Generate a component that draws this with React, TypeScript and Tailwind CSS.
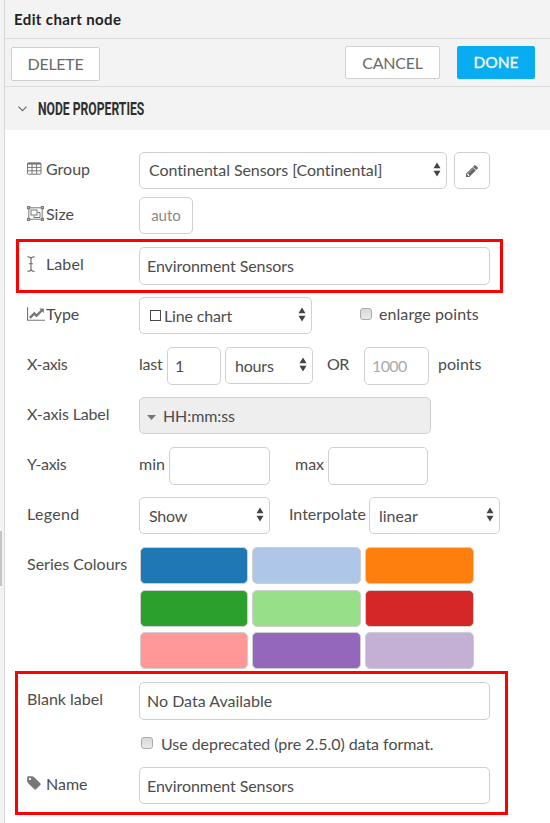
import React from "react";

type Kids = { children?: React.ReactNode; className?: string };

const TableIcon = () => (
  <svg className="-mt-0.5" width="15" height="13" viewBox="0 0 15 13" fill="none" stroke="#777" strokeWidth="1">
    <rect x="0.5" y="1" width="13.5" height="11.2" rx="1" />
    <path d="M0.5 1.6h13.5" strokeWidth="2" />
    <path d="M0.5 5.4h13.5M0.5 8.8h13.5M5 2v10M9.6 2v10" />
  </svg>
);

const ObjectGroupIcon = () => (
  <svg className="-mt-0.5" width="17" height="15" viewBox="0 0 17 15" fill="none" stroke="#777" strokeWidth="1">
    <path d="M2 1.8h13M2 13.2h13M1.8 2v11M15.2 2v11" />
    <rect x="0.5" y="0.5" width="2.2" height="2.2" fill="#bbb" />
    <rect x="14.3" y="0.5" width="2.2" height="2.2" fill="#bbb" />
    <rect x="0.5" y="12.3" width="2.2" height="2.2" fill="#bbb" />
    <rect x="14.3" y="12.3" width="2.2" height="2.2" fill="#bbb" />
    <rect x="4" y="4" width="6" height="5" />
    <path d="M10.500 6.500h2.500v5H7V9.500" />
  </svg>
);

const CursorIcon = () => (
  <svg width="8" height="16" viewBox="0 0 8 16" fill="none" stroke="#666" strokeWidth="1.1">
    <path d="M0.3 0.7C2.5 0.7 4 1.2 4 3v10c0 1.8-1.5 2.3-3.7 2.3M7.7 0.7C5.5 0.7 4 1.2 4 3v10c0 1.8 1.5 2.3 3.7 2.3M2.1 7.7h3.8" />
  </svg>
);

const LineChartIcon = () => (
  <svg className="-mt-px" width="18" height="16" viewBox="0 0 2048 1792" fill="#777">
    <path d="M2048 1536v128h-2048v-1536h128v1408h1920zm-128-1248v435q0 21-19.5 29.5t-35.5-7.5l-121-121-633 633q-10 10-23 10t-23-10l-233-233-416 416-192-192 585-585q10-10 23-10t23 10l233 233 464-464-121-121q-16-16-7.5-35.5t29.5-19.5h435q14 0 23 9t9 23z" />
  </svg>
);

const TagIcon = () => (
  <svg className="-ml-px -mt-0.5" width="16" height="16" viewBox="0 0 1792 1792" fill="#777">
    <path d="M576 448q0-53-37.5-90.5t-90.5-37.5-90.5 37.5-37.5 90.5 37.5 90.5 90.5 37.5 90.5-37.5 37.5-90.5zm1067 576q0 53-37 90l-491 492q-39 37-91 37-53 0-90-37l-715-716q-38-37-64.5-101t-26.5-117v-416q0-52 38-90t90-38h416q53 0 117 26.5t102 64.5l715 714q37 39 37 91z" />
  </svg>
);

const PencilIcon = () => (
  <svg width="14" height="14" viewBox="0 0 1792 1792" fill="#666">
    <path d="M491 1536l91-91-235-235-91 91v107h128v128h107zm523-928q0-22-22-22-10 0-17 7l-542 542q-7 7-7 17 0 22 22 22 10 0 17-7l542-542q7-7 7-17zm-54-192l416 416-832 832h-416v-416zm683 96q0 53-37 90l-166 166-416-416 166-165q36-38 90-38 53 0 91 38l235 234q37 39 37 91z" />
  </svg>
);

const Updown = () => (
  <svg className="-mt-0.5 ml-auto shrink-0" width="8" height="15" viewBox="0 0 8 15" fill="#444">
    <path d="M4 0.5L7.5 6.2h-7zM4 14.5L0.5 8.8h7z" />
  </svg>
);

const Row = ({ children, className = "" }: Kids) => (
  <div className={`flex shrink-0 ${className}`}>{children}</div>
);

const Label = ({ icon, text, className = "" }: { icon?: React.ReactNode; text: string; className?: string }) => (
  <div className="flex h-[34px] w-[112px] shrink-0 items-center whitespace-nowrap">
    {icon && <span className="flex w-[19px] shrink-0">{icon}</span>}
    <span className={className}>{text}</span>
  </div>
);

const Word = ({ children, className = "" }: Kids) => (
  <span className={`h-[34px] shrink-0 whitespace-nowrap leading-[34px] ${className}`}>{children}</span>
);

const Field = ({ children, className = "" }: Kids) => (
  <div className={`flex shrink-0 items-center whitespace-nowrap rounded-[5px] border border-[#d0d0d0] ${className}`}>
    {children}
  </div>
);

const Check = ({ className = "" }: Kids) => (
  <span
    className={`size-3 shrink-0 rounded-[3px] border border-[#aaa] bg-linear-to-b from-[#d8d8d8] to-[#eaeaea] ${className}`}
  />
);

const swatches = [
  "bg-[#1f77b4]", "bg-[#aec7e8]", "bg-[#ff7f0e]",
  "bg-[#2ca02c]", "bg-[#98df8a]", "bg-[#d62728]",
  "bg-[#ff9896]", "bg-[#9467bd]", "bg-[#c5b0d5]",
];

export default function App() {
  return (
    <div className="relative flex h-[823px] w-[550px] overflow-hidden bg-white font-['Lato',sans-serif] text-[16px] text-[#4c4c4c]">
      <div className="flex w-[5px] shrink-0 flex-col border-r border-[#d6d6d6] bg-[#f3f3f3] pt-[531px]">
        <div className="h-[55px] w-[2px] bg-[#c4c4c4]" />
      </div>
      <div className="flex min-w-0 flex-1 flex-col">
        <div className="flex h-[39px] shrink-0 items-center border-b border-[#dcdcdc] bg-[#f3f3f3] pl-[9px] text-[15px] font-bold text-[#222]">
          <span className="tracking-[0.38px]">Edit chart node</span>
        </div>
        <div className="flex h-12 shrink-0 items-start border-b border-[#dcdcdc] bg-[#f3f3f3] pl-[6px] pt-[7px] text-[#6a6a6a]">
          <div className="mt-px flex h-[34px] w-[89px] items-center justify-center rounded-[2px] border border-[#d0d0d0] bg-white tracking-[-0.3px]">DELETE</div>
          <div className="ml-auto flex h-[33px] w-[95px] items-center justify-center rounded-[2px] border border-[#d0d0d0] bg-white tracking-[-0.2px]">CANCEL</div>
          <div className="ml-[17px] mr-[15px] flex h-[33px] w-[78px] items-center justify-center rounded-[2px] bg-[#07adf0] text-[#f3f3f3]">
            <span className="text-[15.5px] font-medium [-webkit-text-stroke:0.3px_#f3f3f3]">DONE</span>
          </div>
        </div>
        <div className="flex h-[43px] shrink-0 items-center bg-[#f3f3f3] pl-[13px]">
          <svg width="9" height="6" viewBox="0 0 9 6" fill="none" stroke="#666" strokeWidth="1.1">
            <path d="M0.5 0.7L4.5 4.7L8.5 0.7" />
          </svg>
          <span className="ml-[11px] mt-px origin-left scale-x-[0.695] whitespace-nowrap font-['Roboto',sans-serif] text-[17.5px] font-bold text-[#2e2e2e]">
            NODE PROPERTIES
          </span>
        </div>

        <div className="flex flex-col pl-[22px] pt-[22px]">
          <Row className="h-[45px]">
            <Label icon={<TableIcon />} text="Group" />
            <Field className="h-[37px] w-[308px] pb-px pl-[9px] pr-[5px]">
              <span className="tracking-[-0.07px]">Continental Sensors [Continental]</span>
              <Updown />
            </Field>
            <Field className="ml-[7px] h-[37px] w-[36px] justify-center rounded-[3px]"><PencilIcon /></Field>
          </Row>
          <Row className="h-[50px]">
            <Label icon={<ObjectGroupIcon />} text="Size" />
            <Field className="h-[37px] w-[54px] justify-center rounded-[2px] text-[15px] text-[#888]"><span>auto</span></Field>
          </Row>
          <Row className="h-[50px]">
            <Label icon={<CursorIcon />} text="Label" className="tracking-[0.1px]" />
            <Field className="h-[38px] w-[351px] pl-[7px]"><span className="tracking-[-0.08px]">Environment Sensors</span></Field>
          </Row>
          <Row className="h-[50px]">
            <Label icon={<LineChartIcon />} text="Type" className="tracking-[-0.2px]" />
            <Field className="h-[37px] w-[173px] pl-[10px] pr-[5px]">
              <span className="mr-[3px] size-[11px] border-[1.5px] border-[#484848]" />
              <span className="tracking-[-0.15px]">Line chart</span>
              <Updown />
            </Field>
            <Check className="ml-[48px] mt-[11px]" />
            <Word className="ml-[7px] tracking-[0.07px]">enlarge points</Word>
          </Row>
          <Row className="h-[50px]">
            <Label text="X-axis" className="tracking-[-0.4px]" />
            <Word className="w-[28px] tracking-[-0.2px]">last</Word>
            <Field className="h-[38px] w-[54px] pl-[7px]"><span>1</span></Field>
            <Field className="ml-[4px] h-[37px] w-[88px] pl-[9px] pr-[5px]"><span className="tracking-[-0.2px]">hours</span><Updown /></Field>
            <Word className="ml-[14px] w-[37px] tracking-[-0.5px]">OR</Word>
            <Field className="h-[38px] w-[65px] pl-[7px] text-[#aaa]"><span className="tracking-[-0.6px]">1000</span></Field>
            <Word className="ml-[9px]">points</Word>
          </Row>
          <Row className="h-[50px]">
            <Label text="X-axis Label" className="tracking-[-0.15px]" />
            <Field className="h-[37px] w-[292px] bg-[#eee] pl-[7px]">
              <svg className="mt-[3px]" width="9" height="5" viewBox="0 0 9 5" fill="#777"><path d="M0 0h9L4.5 5z" /></svg>
              <span className="ml-[7px] tracking-[-0.1px]">HH:mm:ss</span>
            </Field>
          </Row>
          <Row className="h-[50px]">
            <Label text="Y-axis" className="tracking-[-0.4px]" />
            <Word className="w-[30px]">min</Word>
            <Field className="h-[38px] w-[101px]" />
            <Word className="ml-[25px] w-[33px]">max</Word>
            <Field className="h-[38px] w-[100px]" />
          </Row>
          <Row className="h-[50px]">
            <Label text="Legend" className="tracking-[0.3px]" />
            <Field className="h-[37px] w-[131px] pl-[9px] pr-[5px]"><span className="tracking-[-0.2px]">Show</span><Updown /></Field>
            <Word className="ml-[19px] w-[80px]">Interpolate</Word>
            <Field className="h-[37px] w-[131px] pl-[9px] pr-[5px]"><span>linear</span><Updown /></Field>
          </Row>
          <Row className="h-[135px]">
            <Label text="Series Colours" />
            <div className="ml-px grid h-[122px] grid-cols-[108px_109px_109px] grid-rows-[37px_37px_37px] gap-x-[4px] gap-y-[5.5px]">
              {swatches.map((c) => (
                <div key={c} className={`rounded-[5px] border border-[#cfcfcf] ${c}`} />
              ))}
            </div>
          </Row>
          <Row className="h-[50px]">
            <Label text="Blank label" />
            <Field className="h-[38px] w-[351px] pl-[7px]"><span>No Data Available</span></Field>
          </Row>
          <Row className="h-[35px] pl-[114px]">
            <Check className="mt-[5px]" />
            <span className="ml-[8px] h-[24px] whitespace-nowrap leading-[24px] tracking-[-0.04px]">Use deprecated (pre 2.5.0) data format.</span>
          </Row>
          <Row className="h-[38px]">
            <Label icon={<TagIcon />} text="Name" />
            <Field className="h-[37px] w-[351px] pl-[7px]"><span className="tracking-[-0.08px]">Environment Sensors</span></Field>
          </Row>
        </div>
      </div>
      <div className="absolute left-[16px] top-[239px] h-[54px] w-[487px] border-3 border-[#ff0000]" />
      <div className="absolute left-[15px] top-[671px] h-[144px] w-[493px] border-3 border-[#ff0000]" />
    </div>
  );
}
